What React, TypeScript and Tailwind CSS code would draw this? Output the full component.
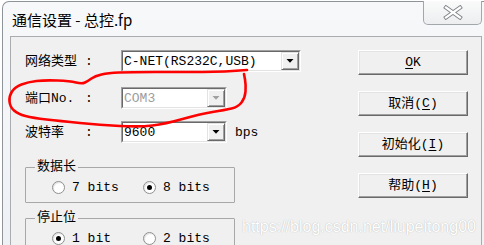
import type { ReactNode } from "react";

const ui = "font-['Liberation_Mono','Noto_Sans_CJK_SC',monospace] text-[13px] leading-[15px] text-black";

function smoothPath(points: number[][]) {
  let d = `M ${points[0][0]} ${points[0][1]}`;
  for (let i = 1; i < points.length - 1; i++) {
    const mx = (points[i][0] + points[i + 1][0]) / 2;
    const my = (points[i][1] + points[i + 1][1]) / 2;
    d += ` Q ${points[i][0]} ${points[i][1]} ${mx} ${my}`;
  }
  const last = points[points.length - 1];
  return d + ` L ${last[0]} ${last[1]}`;
}

const redLoop = [
  [247, 70], [225, 72], [180, 72], [130, 72], [108, 73], [95, 76], [88, 81], [82, 84],
  [70, 81], [45, 80], [28, 82], [15, 87], [9, 96], [10, 107], [18, 114], [33, 118],
  [60, 121], [100, 125], [140, 127], [165, 124], [200, 114], [225, 110], [238, 107],
  [245, 98], [246, 85], [244, 74],
];

function Combo({ value, width, disabled }: { value: string; width: string; disabled?: boolean }) {
  return (
    <div className={`h-[22px] border border-t-[#a0a0a0] border-l-[#a0a0a0] border-r-white border-b-white ${width}`}>
      <div className="h-full flex bg-white border border-t-[#696969] border-l-[#696969] border-r-[#e3e3e3] border-b-[#e3e3e3]">
        <div className={`flex-1 pl-[1px] pt-[2px] ${disabled ? "text-[#9d9d9d]" : "text-black"}`}>{value}</div>
        <div className="w-[18px] h-full bg-[#f0f0f0] flex items-center justify-center border border-t-[#e3e3e3] border-l-[#e3e3e3] border-r-[#696969] border-b-[#696969] shadow-[inset_1px_1px_0_#fff,inset_-1px_-1px_0_#a0a0a0]">
          <svg width="8" height="4" viewBox="0 0 8 4">
            <path d="M0.5 0 H7.5 L4 3.8 Z" fill={disabled ? "#a0a0a0" : "#000"} />
          </svg>
        </div>
      </div>
    </div>
  );
}

function Label({ text }: { text: string }) {
  return (
    <div className="w-[96px] flex">
      <span className="w-[60px] whitespace-pre">{text}</span>
      <span>:</span>
    </div>
  );
}

function Radio({ label, checked }: { label: string; checked?: boolean }) {
  return (
    <div className="w-[91px] flex items-center gap-[7px]">
      <div className="w-[13px] h-[13px] rounded-full bg-white border border-[#8e8f8f] flex items-center justify-center shadow-[inset_1px_1px_1px_rgba(0,0,0,0.12)]">
        {checked && <div className="w-[5px] h-[5px] rounded-full bg-black" />}
      </div>
      <span>{label}</span>
    </div>
  );
}

function Group({ title, children, className }: { title: string; children: ReactNode; className: string }) {
  return (
    <fieldset className={`w-[208px] h-[43px] border border-[#a8a8a8] rounded-[1px] ${className}`}>
      <legend className="ml-[9px] px-[2px] leading-[14px]">{title}</legend>
      <div className="flex pl-[26px] mt-[6px]">{children}</div>
    </fieldset>
  );
}

function Button({ children }: { children: ReactNode }) {
  return (
    <div className="w-[110px] h-[25px] bg-[#f0f0f0] flex items-center justify-center border border-t-white border-l-white border-r-[#696969] border-b-[#696969] shadow-[inset_-1px_-1px_0_#a0a0a0,inset_1px_1px_0_#e3e3e3]">
      {children}
    </div>
  );
}

export default function App() {
  return (
    <div className="w-[484px] h-[245px] overflow-hidden relative bg-white">
      <div className="ml-[2px] mt-[1px] w-[487px] h-[260px] rounded-tl-[7px] border border-r-0 border-b-0 border-[#8f949a] bg-gradient-to-b from-[#f7f8fa] to-[#eef1f4]">
        <div className="h-[34px] flex justify-between">
          <div className="pl-[9px] pt-[10px] font-['Noto_Sans_CJK_SC','Noto_Sans',sans-serif] text-[15px] leading-[15px] text-black">
            通信设置 - 总控.fp
          </div>
          <div className="-mt-[1px] mr-[7px] w-[59px] h-[24px] rounded-b-[5px] border border-t-0 border-[#a3a7ac] bg-gradient-to-b from-[#fafafa] to-[#eceef0] flex items-center justify-center">
            <svg width="20" height="15" viewBox="0 0 20 15">
              <path d="M3 2.5 L17 12.5 M17 2.5 L3 12.5" stroke="#80848a" strokeWidth="4" strokeLinecap="square" />
              <path d="M3 2.5 L17 12.5 M17 2.5 L3 12.5" stroke="#ffffff" strokeWidth="2.2" strokeLinecap="square" />
            </svg>
          </div>
        </div>
        <div className={`mx-[7px] h-[220px] border border-[#a9adb2] bg-[#f0f0f0] flex ${ui}`}>
          <div className="flex flex-col pl-[14px] pt-[13px]">
            <div className="h-[22px] flex items-center">
              <Label text="网络类型" />
              <Combo value="C-NET(RS232C,USB)" width="w-[180px]" />
            </div>
            <div className="mt-[15px] h-[22px] flex items-center">
              <Label text="端口No." />
              <Combo value="COM3" width="w-[106px]" disabled />
            </div>
            <div className="mt-[12px] h-[22px] flex items-center">
              <Label text="波特率" />
              <Combo value="9600" width="w-[106px]" />
              <span className="ml-[8px]">bps</span>
            </div>
            <Group title="数据长" className="mt-[17px]">
              <Radio label="7 bits" />
              <Radio label="8 bits" checked />
            </Group>
            <Group title="停止位" className="mt-[8px]">
              <Radio label="1 bit" checked />
              <Radio label="2 bits" />
            </Group>
          </div>
          <div className="ml-auto mr-[13px] pt-[13px] flex flex-col gap-4">
            <Button>
              <span className="underline underline-offset-2">O</span>K
            </Button>
            <Button>
              取消(<span className="underline underline-offset-2">C</span>)
            </Button>
            <Button>
              初始化(<span className="underline underline-offset-2">I</span>)
            </Button>
            <Button>
              帮助(<span className="underline underline-offset-2">H</span>)
            </Button>
          </div>
        </div>
      </div>
      <svg className="absolute inset-0 pointer-events-none" width="484" height="245" viewBox="0 0 484 245">
        <path d={smoothPath(redLoop)} fill="none" stroke="#ff0000" strokeWidth="2.6" strokeLinecap="round" strokeLinejoin="round" />
      </svg>
      <div className="absolute left-[242px] top-[219px] font-['Liberation_Sans',Arial,sans-serif] text-[16px] leading-[16px] text-white [text-shadow:0_0_1px_rgba(0,0,0,0.3)]">
        https://blog.csdn.net/liupeitong00
      </div>
    </div>
  );
}
